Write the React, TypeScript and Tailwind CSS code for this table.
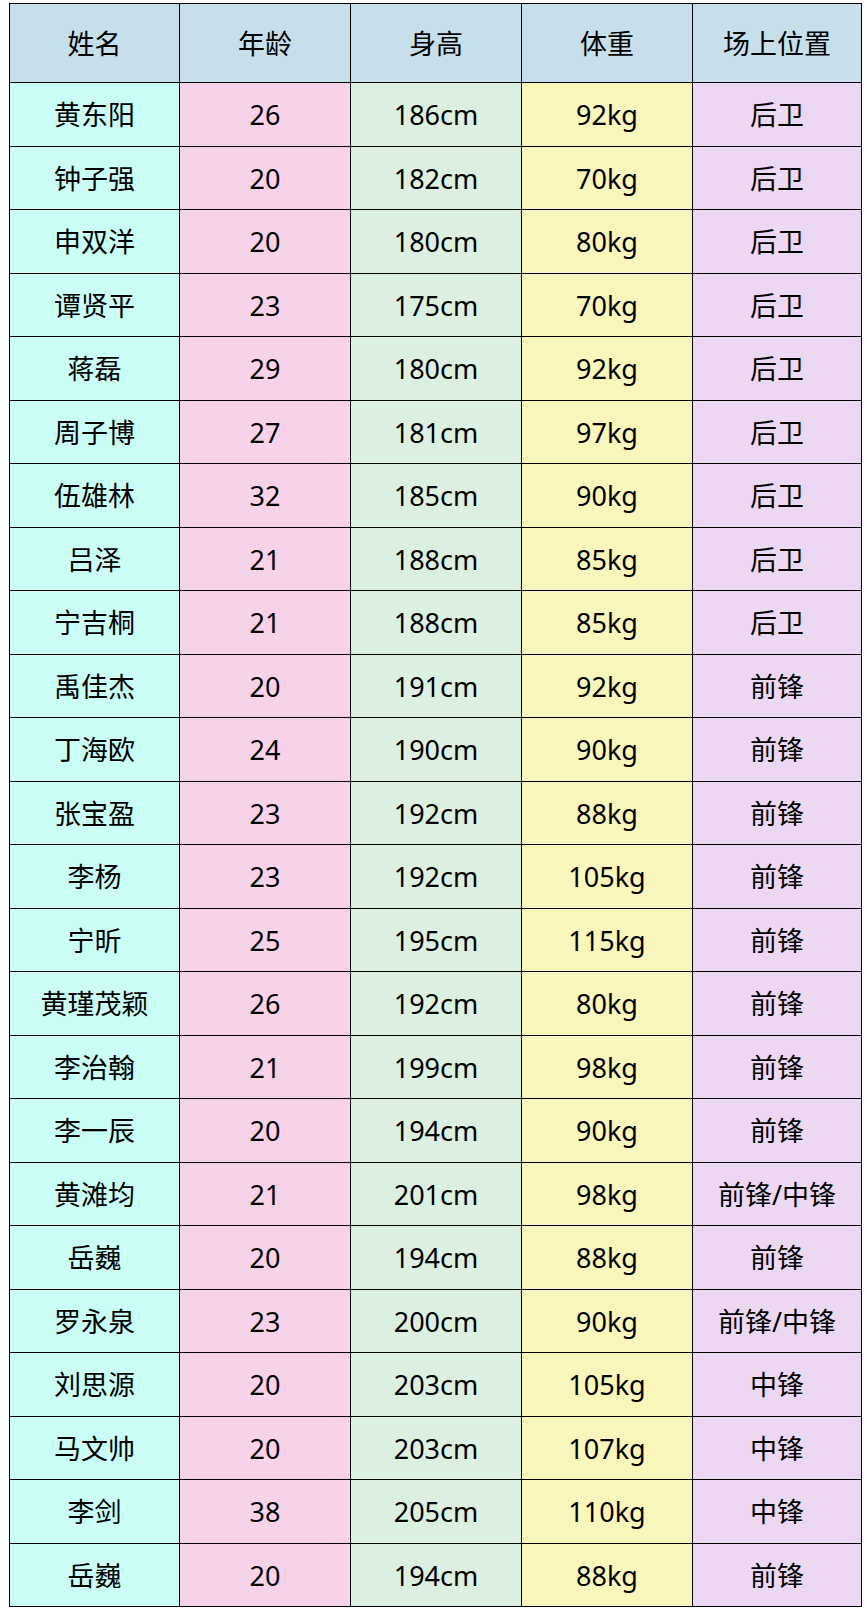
import React from "react";

const rows: [string, string, string, string, string][] = [
  ["黄东阳", "26", "186cm", "92kg", "后卫"],
  ["钟子强", "20", "182cm", "70kg", "后卫"],
  ["申双洋", "20", "180cm", "80kg", "后卫"],
  ["谭贤平", "23", "175cm", "70kg", "后卫"],
  ["蒋磊", "29", "180cm", "92kg", "后卫"],
  ["周子博", "27", "181cm", "97kg", "后卫"],
  ["伍雄林", "32", "185cm", "90kg", "后卫"],
  ["吕泽", "21", "188cm", "85kg", "后卫"],
  ["宁吉桐", "21", "188cm", "85kg", "后卫"],
  ["禹佳杰", "20", "191cm", "92kg", "前锋"],
  ["丁海欧", "24", "190cm", "90kg", "前锋"],
  ["张宝盈", "23", "192cm", "88kg", "前锋"],
  ["李杨", "23", "192cm", "105kg", "前锋"],
  ["宁昕", "25", "195cm", "115kg", "前锋"],
  ["黄瑾茂颖", "26", "192cm", "80kg", "前锋"],
  ["李治翰", "21", "199cm", "98kg", "前锋"],
  ["李一辰", "20", "194cm", "90kg", "前锋"],
  ["黄滩均", "21", "201cm", "98kg", "前锋/中锋"],
  ["岳巍", "20", "194cm", "88kg", "前锋"],
  ["罗永泉", "23", "200cm", "90kg", "前锋/中锋"],
  ["刘思源", "20", "203cm", "105kg", "中锋"],
  ["马文帅", "20", "203cm", "107kg", "中锋"],
  ["李剑", "38", "205cm", "110kg", "中锋"],
  ["岳巍", "20", "194cm", "88kg", "前锋"],
];

const headers = ["姓名", "年龄", "身高", "体重", "场上位置"];
const colBg = ["bg-[#c9fdf5]", "bg-[#f7d3ea]", "bg-[#dcf0e1]", "bg-[#f8f6bb]", "bg-[#ecd8f3]"];

export default function App() {
  return (
    <div
      className="w-[867px] h-[1609px] bg-white pt-[3px] pl-[9px]"
      style={{ fontFamily: '"Noto Sans", "Noto Sans CJK SC", sans-serif' }}
    >
      <div className="grid grid-cols-[170px_171px_171px_171px_169px] border-l border-t border-black w-[853px] text-[27px] text-black leading-none">
        {headers.map((h, i) => (
          <div
            key={"h" + i}
            className="h-[79px] flex items-center justify-center border-r border-b border-black bg-[#c6dfeb]"
          >
            {h}
          </div>
        ))}
        {rows.map((r, ri) =>
          r.map((c, ci) => (
            <div
              key={ri + "-" + ci}
              className={
                (ri % 2 === 0 ? "h-[64px] " : "h-[63px] ") +
                "flex items-center justify-center border-r border-b border-black " +
                colBg[ci]
              }
            >
              {c}
            </div>
          ))
        )}
      </div>
    </div>
  );
}
